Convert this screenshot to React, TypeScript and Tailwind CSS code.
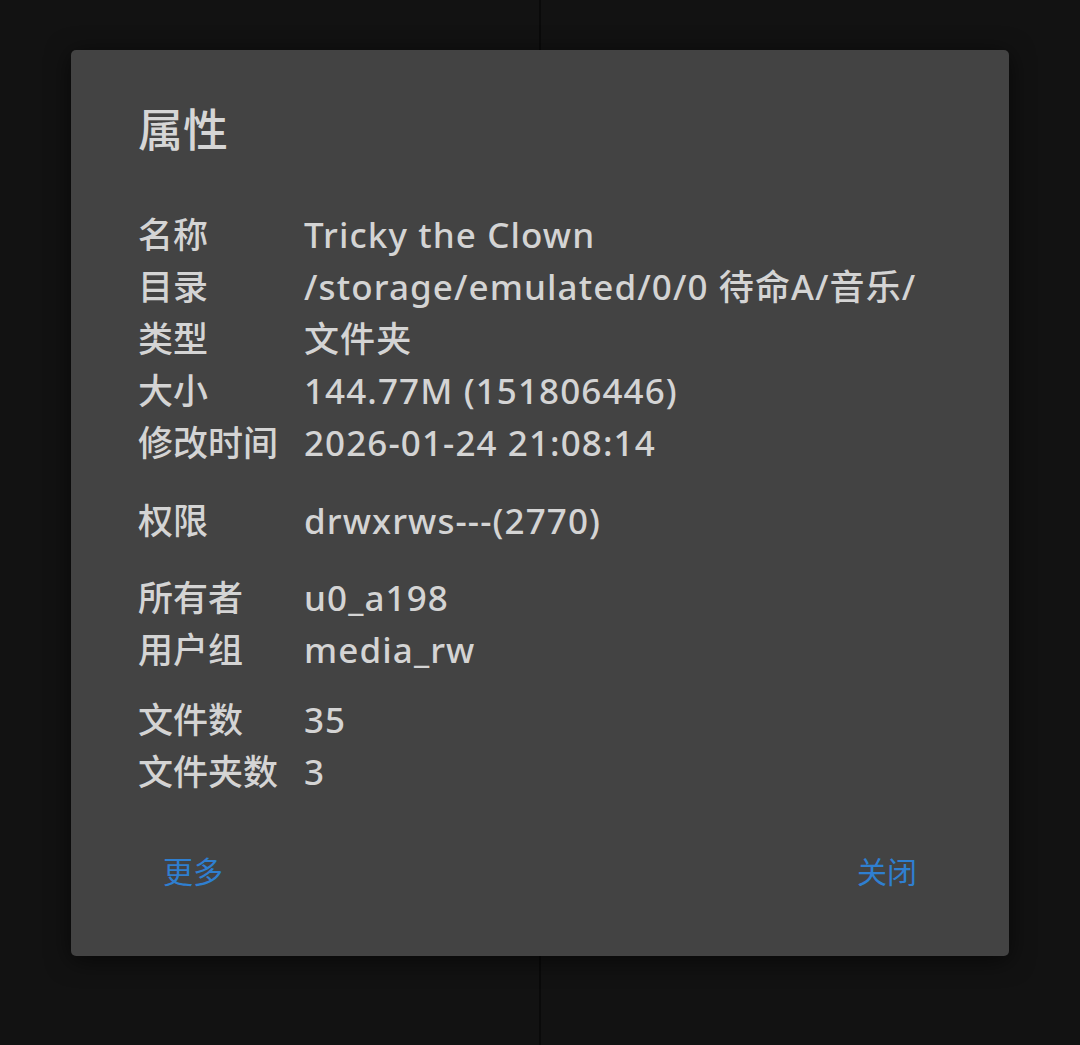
import React from 'react';

const rows: { label: string; value: string }[][] = [
  [
    { label: '名称', value: 'Tricky the Clown' },
    { label: '目录', value: '/storage/emulated/0/0 待命A/音乐/' },
    { label: '类型', value: '文件夹' },
    { label: '大小', value: '144.77M (151806446)' },
    { label: '修改时间', value: '2026-01-24 21:08:14' },
  ],
  [{ label: '权限', value: 'drwxrws---(2770)' }],
  [
    { label: '所有者', value: 'u0_a198' },
    { label: '用户组', value: 'media_rw' },
  ],
  [
    { label: '文件数', value: '35' },
    { label: '文件夹数', value: '3' },
  ],
];

const groupGaps = ['mt-0', 'mt-[26px]', 'mt-[25px]', 'mt-[18px]'];

const App: React.FC = () => {
  return (
    <div
      className="relative w-[1080px] h-[1045px] bg-[#121212] overflow-hidden"
      style={{ fontFamily: '"Noto Sans", "Noto Sans CJK SC", sans-serif' }}
    >
      {/* 背景的两栏 */}
      <div className="flex h-full">
        <div className="w-[541px] h-full border-r-2 border-[#0a0a0a]"></div>
        <div className="flex-1 h-full"></div>
      </div>

      {/* 属性对话框 */}
      <div className="absolute left-[71px] top-[50px] w-[938px] h-[906px] bg-[#434343] rounded-[5px] shadow-[0_4px_24px_rgba(0,0,0,0.6)] flex flex-col">
        <div className="pt-[52px] pl-[67px] pr-[40px]">
          <h2 className="text-[45px] leading-[56px] text-[#d6d6d6] font-medium">属性</h2>

          <div className="mt-[51px]">
            {rows.map((group, gi) => (
              <div key={gi} className={groupGaps[gi]}>
                {group.map((row) => (
                  <div key={row.label} className="flex text-[35px] leading-[52px] text-[#d4d4d4] font-medium">
                    <span className="w-[166px] shrink-0 whitespace-nowrap">{row.label}</span>
                    <span className="whitespace-nowrap tracking-[1.1px]">{row.value}</span>
                  </div>
                ))}
              </div>
            ))}
          </div>
        </div>

        <div className="flex justify-between px-[92px] mt-auto mb-[64px]">
          <button className="text-[30px] leading-[40px] text-[#2f7fd0]">更多</button>
          <button className="text-[30px] leading-[40px] text-[#2f7fd0]">关闭</button>
        </div>
      </div>
    </div>
  );
};

export default App;
